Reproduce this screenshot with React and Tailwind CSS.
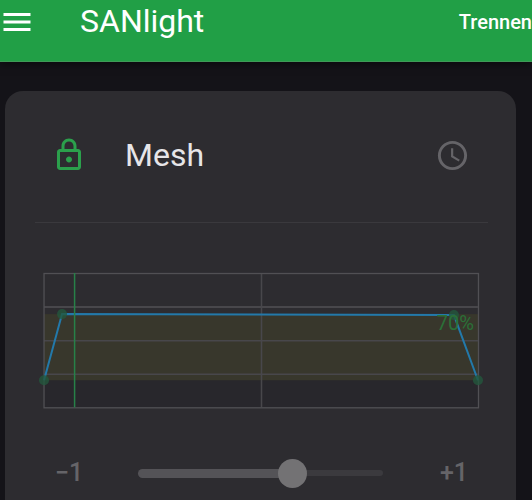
import { useState } from 'react';
import { MdAccessTime, MdMenu, MdOutlineLock } from 'react-icons/md';

const schedule = [
  { x: 5, y: 112 },
  { x: 23, y: 46 },
  { x: 414, y: 47 },
  { x: 438, y: 112 },
];

function Header() {
  return (
    <header className="relative flex h-[62px] items-start border-b border-[#3f9a57] bg-[#219f46] text-white shadow-[0_2px_8px_rgba(0,0,0,0.5)]">
      <button type="button" aria-label="Menu" className="mt-1 -ml-px shrink-0">
        <MdMenu size={36} />
      </button>
      <h1 className="mt-px ml-[45px] text-[32px] leading-10">SANlight</h1>
      <button type="button" className="mt-2 ml-auto shrink-0 text-xl leading-7 font-medium whitespace-nowrap">
        Trennen
      </button>
    </header>
  );
}

function ScheduleChart() {
  const points = schedule.map((p) => `${p.x},${p.y}`).join(' ');

  return (
    <svg viewBox="0 0 444 144" className="block w-full" role="img" aria-label="Schedule">
      <rect x="5" y="112" width="433" height="27" fill="#28272c" />
      <rect x="5" y="46" width="433" height="66" fill="#38372c" />
      <g stroke="#48474b" fill="none">
        <path d="M5 39H438" strokeWidth="2" />
        <path d="M5 72.5H438M5 106H438" strokeWidth="1.5" />
        <path d="M222 5V139" strokeWidth="1.5" />
        <rect x="5" y="5.5" width="433.5" height="134" strokeWidth="1.3" stroke="#515054" />
      </g>
      <polyline points={points} fill="none" stroke="#2379aa" strokeWidth="2" />
      {schedule.map((p) => (
        <circle key={p.x} cx={p.x} cy={p.y} r="5" fill="#23583d" fillOpacity="0.8" />
      ))}
      <path d="M35.5 5V139" stroke="#278148" strokeWidth="1.5" />
      <text x="434" y="62" textAnchor="end" fill="#2b7038" className="text-xl">
        70%
      </text>
    </svg>
  );
}

function OffsetSlider() {
  const [value, setValue] = useState(63);

  return (
    <div className="grid flex-1 items-center">
      <div className="col-start-1 row-start-1 flex items-center">
        <div className="h-[9px] rounded-l-full bg-[#545357]" style={{ width: `${value}%` }} />
        <div className="h-[6px] flex-1 rounded-r-full bg-[#3b3a3e]" />
      </div>
      <input
        type="range"
        min="0"
        max="100"
        value={value}
        onChange={(e) => setValue(Number(e.target.value))}
        aria-label="Offset"
        className="z-10 col-start-1 row-start-1 -mx-3.5 h-[29px] appearance-none bg-transparent [&::-webkit-slider-thumb]:size-[29px] [&::-webkit-slider-thumb]:appearance-none [&::-webkit-slider-thumb]:rounded-full [&::-webkit-slider-thumb]:bg-[#737274]"
      />
    </div>
  );
}

export default function App() {
  return (
    <div className="flex min-h-screen flex-col bg-[#141318] font-[Roboto,sans-serif]">
      <Header />
      <main className="mt-[29px] mr-4 ml-[5px] flex-1 rounded-t-[18px] bg-[#2d2c30] pr-7 pb-2 pl-[30px]">
        <div className="flex items-center border-b border-[#3a393d] pt-11 pr-[18px] pb-[47px] pl-4">
          <MdOutlineLock size={36} className="text-[#2ba04c]" />
          <h2 className="ml-[38px] text-[32px] leading-10 text-[#e6e5e8]">Mesh</h2>
          <button type="button" aria-label="Schedule" className="ml-auto text-[#656468]">
            <MdAccessTime size={35} />
          </button>
        </div>
        <div className="mt-[45px] px-1">
          <ScheduleChart />
        </div>
        <div className="mt-[45px] flex items-center px-5 text-[25px] leading-8 font-medium text-[#656468]">
          <span className="w-[83px]">−1</span>
          <OffsetSlider />
          <span className="w-[85px] text-right">+1</span>
        </div>
      </main>
    </div>
  );
}
